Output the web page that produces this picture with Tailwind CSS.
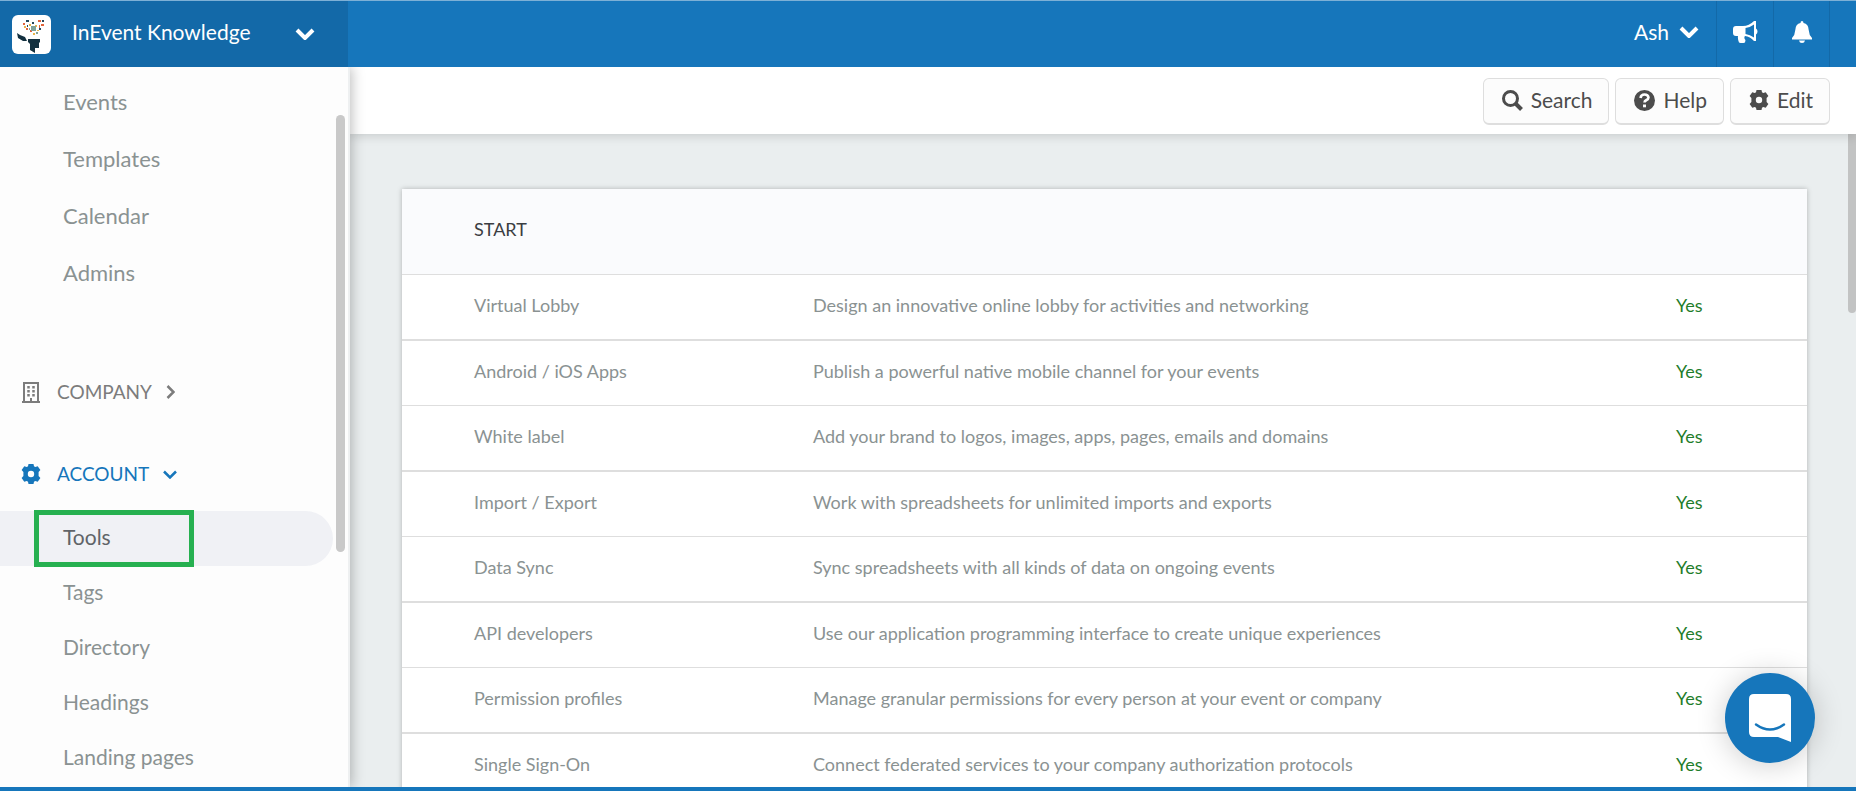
<!DOCTYPE html>
<html lang="en">
<head>
  <meta charset="UTF-8" />
  <meta name="viewport" content="width=device-width, initial-scale=1.0" />
  <title>InEvent Knowledge - Tools</title>
  <script src="https://cdn.jsdelivr.net/npm/@tailwindcss/browser@4"></script>
</head>
<body class="h-screen flex flex-col overflow-hidden bg-[#eaeeef] font-['Lato','Liberation_Sans',sans-serif] text-[#8a9292] border-b-4 border-[#1676bb]">

  <!-- Top bar -->
  <header class="relative z-30 h-[67px] shrink-0 flex bg-[#1676bb] text-white text-[21px] border-t border-[#7db0d6]">
    <button class="w-[348px] pl-3 pr-[33px] flex items-center bg-[#1369a8]">
      <svg class="size-[39px] rounded-md bg-white" viewBox="0 0 39 39">
        <path fill="#12303f" d="M16 24h12v3l-1 1v5h-4v5l-5-3v-6l-2-2zM5 18l3 2 5 2 2 4-4 0-5-3z" />
        <g fill="#e2643c"><rect x="11" y="8" width="2" height="2" /><rect x="26" y="5" width="3" height="2" /><rect x="29" y="9" width="3" height="2" /><rect x="18" y="15" width="2" height="2" /><rect x="14" y="13" width="2" height="2" /><rect x="27" y="10" width="1" height="3" /></g>
        <g fill="#27485a"><rect x="14" y="5" width="3" height="2" /><rect x="30" y="5" width="2" height="2" /><rect x="20" y="7" width="2" height="2" /><rect x="27" y="13" width="2" height="2" /><rect x="15" y="10" width="1" height="2" /></g>
        <g fill="#e9b44c"><rect x="17" y="9" width="2" height="2" /><rect x="23" y="10" width="2" height="2" /><rect x="21" y="18" width="2" height="2" /><rect x="12" y="11" width="2" height="2" /><rect x="25" y="15" width="2" height="1" /></g>
        <g fill="#7fa39a"><rect x="19" y="11" width="5" height="5" /><rect x="24" y="17" width="2" height="2" /><rect x="17" y="13" width="1" height="2" /></g>
      </svg>
      <span class="ml-[21px] pb-1">InEvent Knowledge</span>
      <svg class="ml-auto w-5 h-3" viewBox="0 0 20 12" fill="none" stroke="currentColor" stroke-width="4"><path d="M2 2l8 8 8-8" /></svg>
    </button>
    <div class="ml-auto flex pr-[26px]">
      <button class="flex items-center gap-2.5 pr-[17px] pb-1">
        Ash
        <svg class="w-5 h-3" viewBox="0 0 20 12" fill="none" stroke="currentColor" stroke-width="4"><path d="M2 2l8 8 8-8" /></svg>
      </button>
      <button class="w-[57px] pb-1 flex items-center justify-center border-l border-[#1369a8]" aria-label="News">
        <svg class="w-[25px] h-[22px]" viewBox="0 0 25 22" fill="currentColor">
          <path fill-rule="evenodd" d="M21 0h2v7.500q1.500 1 1.500 3t-1.500 3V20h-2q-4-4.500-9-5-1.500 2 .500 4l-.500 2.500q-3 1-6 0Q4.500 18 5 15H3q-3 0-3-3V8q0-3 3-3h7q6 0 11-5zM21 3.500q-4 3-8.500 3.500v6q4.500.500 8.500 3.500z" />
        </svg>
      </button>
      <button class="w-[57px] pb-1 flex items-center justify-center border-x border-[#1369a8]" aria-label="Notifications">
        <svg class="w-5 h-[22px]" viewBox="0 0 20 22" fill="currentColor">
          <path d="M10 0q1.500 0 1.500 2 5 1 5.200 7 .3 5 3.300 8v1.500H0V17q3-3 3.300-8Q3.500 3 8.500 2 8.500 0 10 0zM7 19.500h6q-.5 2.500-3 2.500t-3-2.500z" />
        </svg>
      </button>
    </div>
  </header>

  <div class="flex-1 min-h-0 flex">

    <!-- Sidebar -->
    <aside class="relative z-20 w-[350px] shrink-0 overflow-hidden bg-[#fdfdfd] border-r-2 border-[#eef0f1] shadow-[2px_0_12px_rgba(0,0,0,0.25)] text-[21px]">
      <nav class="pt-1.5">
        <ul class="text-[22px] leading-[57px]">
          <li><a href="#" class="block pl-[63px]">Events</a></li>
          <li><a href="#" class="block pl-[63px]">Templates</a></li>
          <li><a href="#" class="block pl-[63px]">Calendar</a></li>
          <li><a href="#" class="block pl-[63px]">Admins</a></li>
        </ul>
        <button class="mt-[63px] h-14 w-full pl-[22px] flex items-center text-[19px] text-[#7c7c7c]">
          <svg class="w-[18px] h-[21px]" viewBox="0 0 18 21" fill="none" stroke="currentColor" stroke-width="2">
            <path d="M2 20V1h14v19M0 20h18M9 20v-4" />
            <path stroke-width="2.500" stroke-dasharray="2.500 1.500" d="M6.500 4v11M11.500 4v11" />
          </svg>
          <span class="ml-[17px]">COMPANY</span>
          <svg class="ml-3.5 w-[9px] h-3.5" viewBox="0 0 9 14" fill="none" stroke="currentColor" stroke-width="2.500"><path d="M1.500 1l6 6-6 6" /></svg>
        </button>
        <button class="mt-[26px] h-14 w-full pl-[21px] flex items-center text-[19px] text-[#1676bb]">
          <svg class="size-5" viewBox="0 0 20 20" fill="currentColor">
            <path fill-rule="evenodd" d="M7.500 0h5l.5 2.300 1.200.7 2.500-.8L19.400 6l-1.800 2v4l1.800 2-2.700 3.800-2.500-.8-1.200.7-.5 2.300h-5L7 17.700 5.800 17l-2.500.8L.6 14l1.800-2V8L.6 6l2.700-3.800 2.500.8L7 2.300zM10 6.800a3.200 3.200 0 100 6.400 3.200 3.200 0 000-6.400z" />
          </svg>
          <span class="ml-4">ACCOUNT</span>
          <svg class="ml-3.5 w-3.5 h-[9px]" viewBox="0 0 14 9" fill="none" stroke="currentColor" stroke-width="2.500"><path d="M1 1.500l6 6 6-6" /></svg>
        </button>
        <ul class="mt-[9px] leading-[52px]">
          <li class="relative h-[55px] mr-[15px] rounded-r-full bg-[#f0f1f5] text-[#606468]">
            <a href="#" class="block pl-[63px]">Tools</a>
            <span class="absolute left-[34px] -inset-y-px w-40 border-5 border-[#26b050]"></span>
          </li>
          <li class="h-[55px]"><a href="#" class="block pl-[63px]">Tags</a></li>
          <li class="h-[55px]"><a href="#" class="block pl-[63px]">Directory</a></li>
          <li class="h-[55px]"><a href="#" class="block pl-[63px]">Headings</a></li>
          <li class="h-[55px]"><a href="#" class="block pl-[63px]">Landing pages</a></li>
        </ul>
      </nav>
      <!-- scroll thumb -->
      <div class="absolute right-[3px] top-12 w-[9px] h-[437px] rounded-full bg-[#c9c9c9]"></div>
    </aside>

    <div class="flex-1 min-w-0 flex flex-col">
      <!-- Actions -->
      <div class="relative z-10 h-[67px] shrink-0 pt-0.5 pr-[26px] flex items-center justify-end gap-1.5 bg-white shadow-[0_2px_10px_rgba(0,0,0,0.15)] text-[21px] text-[#4c4c4c]">
        <button class="h-[47px] pl-[18px] pr-4 pb-0.5 flex items-center gap-2 rounded-md border border-b-2 border-[#dedede] bg-[#fcfcfc]">
          <svg class="size-[21px]" viewBox="0 0 21 21" fill="none" stroke="currentColor" stroke-width="3"><circle cx="8.500" cy="8.500" r="7" /><path stroke-width="4" d="M13.500 13.500l6 6" /></svg>
          Search
        </button>
        <button class="h-[47px] pl-[18px] pr-4 pb-0.5 flex items-center gap-2 rounded-md border border-b-2 border-[#dedede] bg-[#fcfcfc]">
          <svg class="size-[21px]" viewBox="0 0 21 21"><circle cx="10.500" cy="10.500" r="10.500" fill="currentColor" /><path d="M6.500 8q.5-3.500 4-3.500t4 3q0 1.500-2 2.500-2 1-2 2.500" fill="none" stroke="#fff" stroke-width="2.600" /><path d="M9 14.500h3v2.800H9z" fill="#fff" /></svg>
          Help
        </button>
        <button class="h-[47px] pl-[18px] pr-4 pb-0.5 flex items-center gap-2 rounded-md border border-b-2 border-[#dedede] bg-[#fcfcfc]">
          <svg class="size-5" viewBox="0 0 20 20" fill="currentColor">
            <path fill-rule="evenodd" d="M7.500 0h5l.5 2.300 1.200.7 2.500-.8L19.400 6l-1.800 2v4l1.800 2-2.700 3.800-2.500-.8-1.200.7-.5 2.300h-5L7 17.700 5.800 17l-2.500.8L.6 14l1.800-2V8L.6 6l2.700-3.800 2.500.8L7 2.300zM10 6.800a3.200 3.200 0 100 6.400 3.200 3.200 0 000-6.400z" />
          </svg>
          Edit
        </button>
      </div>

      <!-- Tools list -->
      <main class="relative flex-1 min-h-0 overflow-hidden pt-[55px] pl-[52px] pr-[49px]">
        <div class="bg-white shadow-[0_0_5px_rgba(0,0,0,0.25)]">
          <table class="w-full table-fixed border-separate border-spacing-0 text-lg text-left">
            <colgroup>
              <col class="w-[411px]" />
              <col />
              <col class="w-[131px]" />
            </colgroup>
            <thead>
              <tr class="h-[86px] bg-[#fafbfd] text-[#3a3d42]"><th colspan="3" class="pl-[72px] pb-1.5 font-normal border-b border-[#dedede]">START</th></tr>
            </thead>
            <tbody id="tools"></tbody>
          </table>
        </div>
        <div class="absolute right-0 top-0 w-2 h-[179px] rounded-b-full bg-[#c2c3c3]"></div>
      </main>
    </div>
  </div>

  <!-- Chat launcher -->
  <button class="fixed z-30 right-[41px] bottom-7 size-[90px] rounded-full bg-[#1676bb] shadow-[0_2px_30px_rgba(0,0,0,0.2)] flex items-center justify-center" aria-label="Chat">
    <svg class="w-[42px] h-12" viewBox="0 0 42 48"><path fill="#fff" d="M5 0h32q5 0 5 5v43l-13-5H5q-5 0-5-5V5q0-5 5-5z" /><path d="M7 30.500q14 10 28 0" fill="none" stroke="#1676bb" stroke-width="2.500" stroke-linecap="round" /></svg>
  </button>

  <script>
    const tools = [
      ["Virtual Lobby", "Design an innovative online lobby for activities and networking"],
      ["Android / iOS Apps", "Publish a powerful native mobile channel for your events"],
      ["White label", "Add your brand to logos, images, apps, pages, emails and domains"],
      ["Import / Export", "Work with spreadsheets for unlimited imports and exports"],
      ["Data Sync", "Sync spreadsheets with all kinds of data on ongoing events"],
      ["API developers", "Use our application programming interface to create unique experiences"],
      ["Permission profiles", "Manage granular permissions for every person at your event or company"],
      ["Single Sign-On", "Connect federated services to your company authorization protocols"],
    ];

    document.getElementById("tools").innerHTML = tools.map(([name, text], i) => {
      const line = i % 2 === 0 ? "h-[66px] border-b-2 border-[#dedede]" : "h-[65px] border-b border-[#dedede]";
      return `
        <tr>
          <td class="pl-[72px] pb-1 ${line}">${name}</td>
          <td class="pb-1 ${line}">${text}</td>
          <td class="pb-1 text-[#1f7d2b] ${line}">Yes</td>
        </tr>`;
    }).join("");
  </script>
</body>
</html>
